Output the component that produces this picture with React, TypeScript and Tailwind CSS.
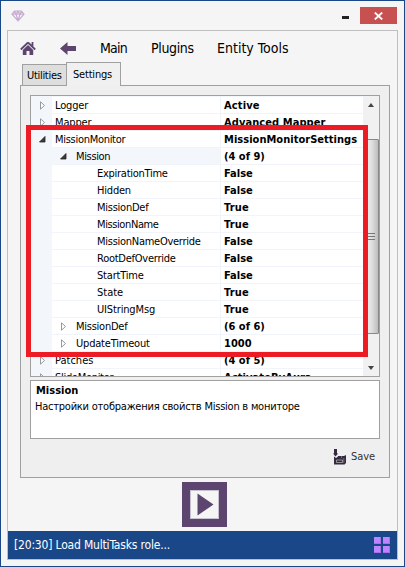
import React from "react";

type Row = { name: string; value: string; depth: number; mark?: "open" | "closed"; active?: boolean; ls: string; vs: string };

const rows: Row[] = [
  { name: "Logger", value: "Active", depth: 0, mark: "closed", ls: "tracking-[-0.15px]", vs: "tracking-[0.15px]" },
  { name: "Mapper", value: "Advanced Mapper", depth: 0, mark: "closed", ls: "tracking-[-0.15px]", vs: "tracking-[0.08px]" },
  { name: "MissionMonitor", value: "MissionMonitorSettings", depth: 0, mark: "open", ls: "tracking-[-0.29px]", vs: "tracking-[0.03px]" },
  { name: "Mission", value: "(4 of 9)", depth: 1, mark: "open", active: true, ls: "tracking-[-0.35px]", vs: "tracking-[0px]" },
  { name: "ExpirationTime", value: "False", depth: 2, ls: "tracking-[-0.27px]", vs: "tracking-[0px]" },
  { name: "Hidden", value: "False", depth: 2, ls: "tracking-[-0.2px]", vs: "tracking-[0px]" },
  { name: "MissionDef", value: "True", depth: 2, ls: "tracking-[-0.25px]", vs: "tracking-[0.15px]" },
  { name: "MissionName", value: "True", depth: 2, ls: "tracking-[-0.4px]", vs: "tracking-[0.15px]" },
  { name: "MissionNameOverride", value: "False", depth: 2, ls: "tracking-[-0.27px]", vs: "tracking-[0px]" },
  { name: "RootDefOverride", value: "False", depth: 2, ls: "tracking-[-0.25px]", vs: "tracking-[0px]" },
  { name: "StartTime", value: "False", depth: 2, ls: "tracking-[-0.2px]", vs: "tracking-[0px]" },
  { name: "State", value: "True", depth: 2, ls: "tracking-[0px]", vs: "tracking-[0.15px]" },
  { name: "UIStringMsg", value: "True", depth: 2, ls: "tracking-[-0.15px]", vs: "tracking-[0.15px]" },
  { name: "MissionDef", value: "(6 of 6)", depth: 1, mark: "closed", ls: "tracking-[-0.25px]", vs: "tracking-[0px]" },
  { name: "UpdateTimeout", value: "1000", depth: 1, mark: "closed", ls: "tracking-[-0.2px]", vs: "tracking-[0px]" },
  { name: "Patches", value: "(4 of 5)", depth: 0, mark: "closed", ls: "tracking-[0px]", vs: "tracking-[0px]" },
  { name: "SlideMonitor", value: "ActivateByAura", depth: 0, mark: "closed", ls: "tracking-[-0.3px]", vs: "tracking-[0.1px]" },
];

const indent = ["pl-[8px]", "pl-[29px]", "pl-[66px]"];

function Marker({ kind }: { kind: "open" | "closed" }) {
  return (
    <svg className="mr-[9px] h-[9px] w-[7px] shrink-0 overflow-visible" viewBox="0 0 7 9">
      {kind === "open" ? (
        <path d="M6 1.5V7H0.5Z" fill="#3a3a3a" stroke="#222" strokeWidth="0.8" />
      ) : (
        <path d="M1.5 0.8V8.2L5.5 4.5Z" fill="#fff" stroke="#999" />
      )}
    </svg>
  );
}

function PropertyRow({ row }: { row: Row }) {
  return (
    <div className={`flex h-[17px] shrink-0 ${row.active ? "bg-[#f3f6fb]" : "bg-white"}`}>
      <div className="-mr-[21px] w-[21px] shrink-0 bg-[#f3f6fb]" />
      <div className={`z-10 flex w-[189px] shrink-0 items-center ${indent[row.depth]}`}>
        {row.mark && <Marker kind={row.mark} />}
        <span className={`leading-[17px] ${row.ls}`}>{row.name}</span>
      </div>
      <div className="-ml-[168px] w-[168px] shrink-0 border-b border-[#f1f5fb]" />
      <div className="flex-1 border-b border-l border-[#f1f5fb] bg-white pl-[3px]">
        <span className={`block leading-[17px] font-bold ${row.vs}`}>{row.value}</span>
      </div>
    </div>
  );
}

function ScrollBar() {
  return (
    <div className="flex w-[16px] shrink-0 flex-col items-center bg-[#f1f1f1]">
      <svg className="h-[43px] w-4" viewBox="0 0 16 43">
        <path d="M5 11L8 7L11 11Z" fill="#444" />
      </svg>
      <div className="flex h-[195px] w-[15px] items-center justify-center rounded-[1px] border border-[#888] bg-linear-to-r from-[#f4f4f4] via-[#e0e0e0] to-[#bdbdbd]">
        <div className="flex w-2 flex-col gap-[2px]">
          <i className="h-px bg-[#777]" />
          <i className="h-px bg-[#777]" />
          <i className="h-px bg-[#777]" />
        </div>
      </div>
      <svg className="h-[42px] w-4" viewBox="0 0 16 42">
        <path d="M5 32L8 36L11 32Z" fill="#444" />
      </svg>
    </div>
  );
}

export default function App() {
  return (
    <div className="flex h-[567px] w-[405px] flex-col border border-[#1a4788] bg-[#f5f5f5] px-[6px] font-['DejaVu_Sans_Condensed','DejaVu_Sans',sans-serif] text-[11px] whitespace-nowrap text-black">
      <header className="flex h-[29px] shrink-0 items-start">
        <svg className="mt-[9px] ml-1 h-[12px] w-[14px]" viewBox="0 0 14 12" fill="none" stroke="#c6aed2" strokeWidth="1.2">
          <path d="M3.5 1H10.5L13 4.2L7 10.8L1 4.2ZM1 4.2H13M3.5 1L5 4.2L7 10.5L9 4.2L10.5 1M5 4.2L7 1L9 4.2" />
        </svg>
        <div className="mt-[15px] ml-auto h-[3px] w-[7px] bg-[#222]" />
        <div className="mt-[6px] mr-px ml-[11px] flex h-[17px] w-[37px] items-center justify-center bg-[#c75050]">
          <svg className="h-[8px] w-[9px]" viewBox="0 0 9 8" stroke="#fff" strokeWidth="1.8">
            <path d="M0.8 0.5L8.2 7.5M8.2 0.5L0.8 7.5" />
          </svg>
        </div>
      </header>

      <main className="flex h-[530px] w-[391px] flex-col border border-[#bfbfbf]">
        <nav className="flex h-[31px] shrink-0 items-center pt-[3px] text-[14px]">
          <svg className="ml-[12px] h-[15px] w-[16px]" viewBox="0 0 16 15">
            <path d="M8 1.5L15.2 8.5M8 1.5L0.8 8.5M12.5 1V5" fill="none" stroke="#5c4670" strokeWidth="1.8" />
            <path d="M8 4L13.2 9V14H9.5V10H6.5V14H2.8V9Z" fill="#5c4670" />
          </svg>
          <svg className="ml-[24px] h-[13px] w-[16px]" viewBox="0 0 16 13">
            <path d="M0 6.5L7.5 0V4H16V9H7.5V13Z" fill="#5c4670" />
          </svg>
          <span className="ml-[24px] w-[51px] tracking-[-0.8px]">Main</span>
          <span className="w-[66px] tracking-[-0.35px]">Plugins</span>
          <span>Entity Tools</span>
        </nav>

        <div className="ml-[14px] flex h-[23px] shrink-0 items-end">
          <div className="h-[21px] w-[44px] border border-r-0 border-b-0 border-[#a0a0a0] bg-[#dedede] pl-[4px] leading-[21px] tracking-[-0.3px]">Utilities</div>
          <div className="z-10 -mb-px h-[24px] w-[55px] border border-b-0 border-[#a0a0a0] bg-[#f0f0f0] pl-[6px] leading-[23px] tracking-[-0.2px]">Settings</div>
        </div>

        <section className="ml-[12px] flex h-[393px] w-[370px] shrink-0 flex-col border border-[#a0a0a0] bg-[#efefef] px-[9px] pt-[9px]">
          <div className="relative h-[282px] w-[350px] shrink-0">
            <div className="flex h-full overflow-hidden border border-[#a0a0a0] bg-[#f3f6fb]">
              <div className="flex w-[332px] flex-col pt-px">
                {rows.map((row) => (
                  <PropertyRow key={row.name + row.depth} row={row} />
                ))}
              </div>
              <ScrollBar />
            </div>
            <div className="absolute top-[30px] -left-[4px] z-20 h-[232px] w-[342px] border-5 border-[#ed1c24]" />
          </div>

          <div className="mt-[3px] h-[59px] w-[350px] shrink-0 border border-[#a0a0a0] bg-white pl-[4px]">
            <div className="mt-px ml-px h-[17px] leading-[17px] font-bold">Mission</div>
            <div className="h-[16px] leading-[16px] tracking-[-0.23px]">Настройки отображения свойств Mission в мониторе</div>
          </div>

          <div className="mt-[9px] ml-[303px] flex h-[17px] items-center">
            <svg className="h-[16px] w-[14px]" viewBox="0 0 14 16">
              <path d="M1 7.5L3 9L5 7.5V7H11L13 6V14L11.5 15.5H1Z" fill="#352b40" />
              <path d="M1 0H4V4.5H5.2L2.5 7.5L0 4.5H1Z" fill="#352b40" />
              <path d="M3.5 11H9.5V13.5H3.5Z" fill="none" stroke="#bbb" strokeWidth="0.7" />
              <path d="M8.5 7V9M10.8 9V14" stroke="#999" strokeWidth="0.6" />
            </svg>
            <span className="mt-px ml-[4px] tracking-[-0.05px] text-[#333]">Save</span>
          </div>
        </section>

        <div className="mt-[4px] ml-[174px] flex size-[45px] shrink-0 items-center justify-center bg-[#5c4670]">
          <div className="size-[29px] border border-[#c9c1d0] bg-[#f5f5f5]">
            <svg className="size-[27px]" viewBox="0 0 27 27">
              <path d="M6.5 2.5L22.5 13.5L6.5 24.5Z" fill="#5c4670" />
            </svg>
          </div>
        </div>

        <footer className="mt-auto flex h-[28px] shrink-0 items-center bg-[#1a4788] pr-[7px] pl-[6px] text-[12px] text-white">
          <span className="tracking-[-0.18px]">[20:30] Load MultiTasks role...</span>
          <div className="ml-auto grid grid-cols-2 gap-[2px]">
            {[0, 1, 2, 3].map((i) => (
              <i key={i} className="size-[7px] border-r border-b border-[#aa6cf0] bg-[#bd84ff]" />
            ))}
          </div>
        </footer>
      </main>
    </div>
  );
}
